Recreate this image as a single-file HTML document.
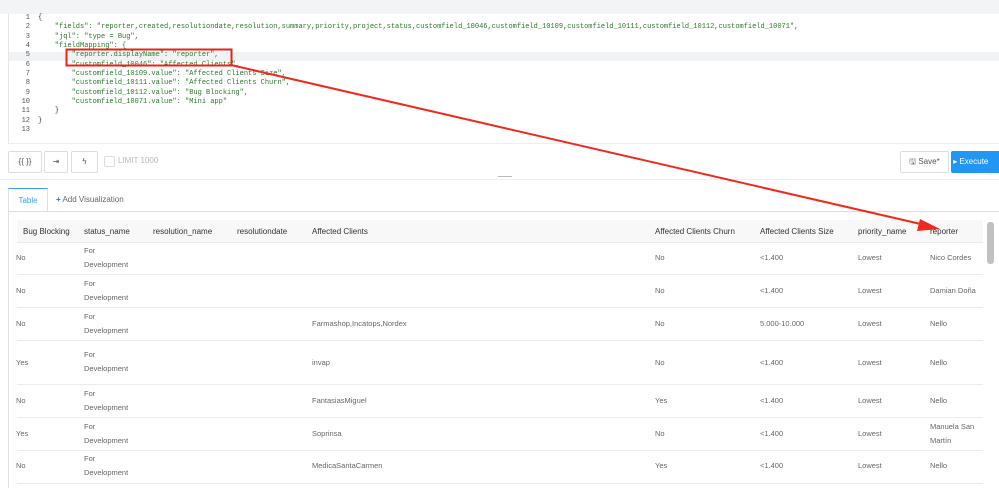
<!DOCTYPE html>
<html><head><style>
body{margin:0;width:999px;height:488px;overflow:hidden;background:#fff;font-family:"Liberation Sans",sans-serif;position:relative}
.a{position:absolute}
.code{font-family:"Liberation Mono",monospace;font-size:7px;line-height:9.35px;color:#2a7a2a;white-space:pre}
.ln{font-family:"Liberation Mono",monospace;font-size:7px;line-height:9.35px;color:#555;text-align:right;width:14px}
.btn{position:absolute;border:1px solid #ddd;border-radius:2px;background:#fff;height:20px;top:151px;font-size:8px;color:#555;text-align:center;line-height:20px}
.th{position:absolute;font-size:8px;color:#333;top:227px}
.td{position:absolute;font-size:7.5px;color:#666;line-height:14px}
.hl{position:absolute;left:17px;width:966px;height:1px;background:#ececec}
</style></head><body>
<div class="a" style="left:0;top:0;width:999px;height:14px;background:#f3f4f6"></div>
<div class="a" style="left:8px;top:14px;width:991px;height:129px;border-left:1px solid #e6e6e6;border-bottom:1px solid #eee"></div>
<div class="a" style="left:9px;top:52px;width:990px;height:9px;background:#f1f2f4"></div>
<div class="a ln" style="left:16px;top:14px">1<br>2<br>3<br>4<br>5<br>6<br>7<br>8<br>9<br>10<br>11<br>12<br>13</div>
<div class="a code" style="left:38px;top:14px"><span style="color:#333">{</span>
    "fields": "reporter,created,resolutiondate,resolution,summary,priority,project,status,customfield_10046,customfield_10109,customfield_10111,customfield_10112,customfield_10071",
    "jql": "type = Bug",
    "fieldMapping": {
        "reporter.displayName": "reporter",
        "customfield_10046": "Affected Clients",
        "customfield_10109.value": "Affected Clients Size",
        "customfield_10111.value": "Affected Clients Churn",
        "customfield_10112.value": "Bug Blocking",
        "customfield_10071.value": "Mini app"
    <span style="color:#333">}</span>
<span style="color:#333">}</span></div>
<div class="btn" style="left:8px;width:32px">{{ }}</div>
<div class="btn" style="left:44px;width:22px">⇥</div>
<div class="btn" style="left:71px;width:25px">ϟ</div>
<div class="a" style="left:104px;top:156px;width:9px;height:9px;border:1px solid #ddd;border-radius:2px"></div>
<div class="a" style="left:118px;top:156px;font-size:8px;color:#bbb">LIMIT 1000</div>
<div class="btn" style="left:900px;width:47px;top:151px">🖫 Save*</div>
<div class="a" style="left:951px;top:151px;width:48px;height:22px;background:#2196f3;color:#fff;font-size:8px;line-height:22px;border-radius:2px 0 0 2px">&nbsp;▸ Execute</div>
<div class="a" style="left:0;top:179px;width:999px;height:1px;background:#eee"></div>
<div class="a" style="left:498px;top:176px;width:14px;height:1px;background:#bbb"></div>
<div class="a" style="left:8px;top:188px;width:38px;height:23px;border:1px solid #e0e0e0;border-bottom:none;border-top:1px solid #3a9ef5;color:#3a9ef5;font-size:8px;text-align:center;line-height:24px;background:#fff">Table</div>
<div class="a" style="left:56px;top:195px;font-size:8px;color:#666"><span style="color:#2a6fd6;font-weight:bold">+</span> Add Visualization</div>
<div class="a" style="left:8px;top:211px;width:991px;height:1px;background:#ddd"></div>
<div class="a" style="left:8px;top:211px;width:1px;height:277px;background:#e0e0e0"></div>
<div class="a" style="left:17px;top:220px;width:966px;height:22px;background:#f8f8f8"></div>
<div class="a" style="left:987px;top:222px;width:7px;height:42px;background:#c1c1c1;border-radius:3px"></div>
<div class="th" style="left:23px">Bug Blocking</div>
<div class="th" style="left:84px">status_name</div>
<div class="th" style="left:153px">resolution_name</div>
<div class="th" style="left:237px">resolutiondate</div>
<div class="th" style="left:312px">Affected Clients</div>
<div class="th" style="left:655px">Affected Clients Churn</div>
<div class="th" style="left:760px">Affected Clients Size</div>
<div class="th" style="left:858px">priority_name</div>
<div class="th" style="left:930px">reporter</div>
<div class="hl" style="top:242px"></div><div class="hl" style="top:274px"></div><div class="hl" style="top:307px"></div><div class="hl" style="top:340px"></div><div class="hl" style="top:384px"></div><div class="hl" style="top:417px"></div><div class="hl" style="top:450px"></div><div class="hl" style="top:483px"></div>

<div class="td" style="left:16px;top:251px">No</div><div class="td" style="left:84px;top:244px">For<br>Development</div><div class="td" style="left:655px;top:251px">No</div><div class="td" style="left:760px;top:251px">&lt;1.400</div><div class="td" style="left:858px;top:251px">Lowest</div><div class="td" style="left:930px;top:251px">Nico Cordes</div>
<div class="td" style="left:16px;top:284px">No</div><div class="td" style="left:84px;top:277px">For<br>Development</div><div class="td" style="left:655px;top:284px">No</div><div class="td" style="left:760px;top:284px">&lt;1.400</div><div class="td" style="left:858px;top:284px">Lowest</div><div class="td" style="left:930px;top:284px">Damian Doña</div>
<div class="td" style="left:16px;top:317px">No</div><div class="td" style="left:84px;top:310px">For<br>Development</div><div class="td" style="left:312px;top:317px">Farmashop,Incatops,Nordex</div><div class="td" style="left:655px;top:317px">No</div><div class="td" style="left:760px;top:317px">5.000-10.000</div><div class="td" style="left:858px;top:317px">Lowest</div><div class="td" style="left:930px;top:317px">Nello</div>
<div class="td" style="left:16px;top:356px">Yes</div><div class="td" style="left:84px;top:348px">For<br>Development</div><div class="td" style="left:312px;top:356px">invap</div><div class="td" style="left:655px;top:356px">No</div><div class="td" style="left:760px;top:356px">&lt;1.400</div><div class="td" style="left:858px;top:356px">Lowest</div><div class="td" style="left:930px;top:356px">Nello</div>
<div class="td" style="left:16px;top:394px">No</div><div class="td" style="left:84px;top:387px">For<br>Development</div><div class="td" style="left:312px;top:394px">FantasiasMiguel</div><div class="td" style="left:655px;top:394px">Yes</div><div class="td" style="left:760px;top:394px">&lt;1.400</div><div class="td" style="left:858px;top:394px">Lowest</div><div class="td" style="left:930px;top:394px">Nello</div>
<div class="td" style="left:16px;top:427px">Yes</div><div class="td" style="left:84px;top:420px">For<br>Development</div><div class="td" style="left:312px;top:427px">Soprinsa</div><div class="td" style="left:655px;top:427px">No</div><div class="td" style="left:760px;top:427px">&lt;1.400</div><div class="td" style="left:858px;top:427px">Lowest</div><div class="td" style="left:930px;top:420px">Manuela San<br>Martín</div>
<div class="td" style="left:16px;top:459px">No</div><div class="td" style="left:84px;top:452px">For<br>Development</div><div class="td" style="left:312px;top:459px">MedicaSantaCarmen</div><div class="td" style="left:655px;top:459px">Yes</div><div class="td" style="left:760px;top:459px">&lt;1.400</div><div class="td" style="left:858px;top:459px">Lowest</div><div class="td" style="left:930px;top:459px">Nello</div>

<svg class="a" style="left:0;top:0" width="999" height="488">
<rect x="66.5" y="49.5" width="165" height="16" fill="none" stroke="#e8231a" stroke-width="2"/>
<line x1="231" y1="65" x2="925" y2="225" stroke="#ee2a1e" stroke-width="2"/>
<polygon points="940,229 920,219 917,231" fill="#ee2a1e"/>
</svg>
</body></html>
